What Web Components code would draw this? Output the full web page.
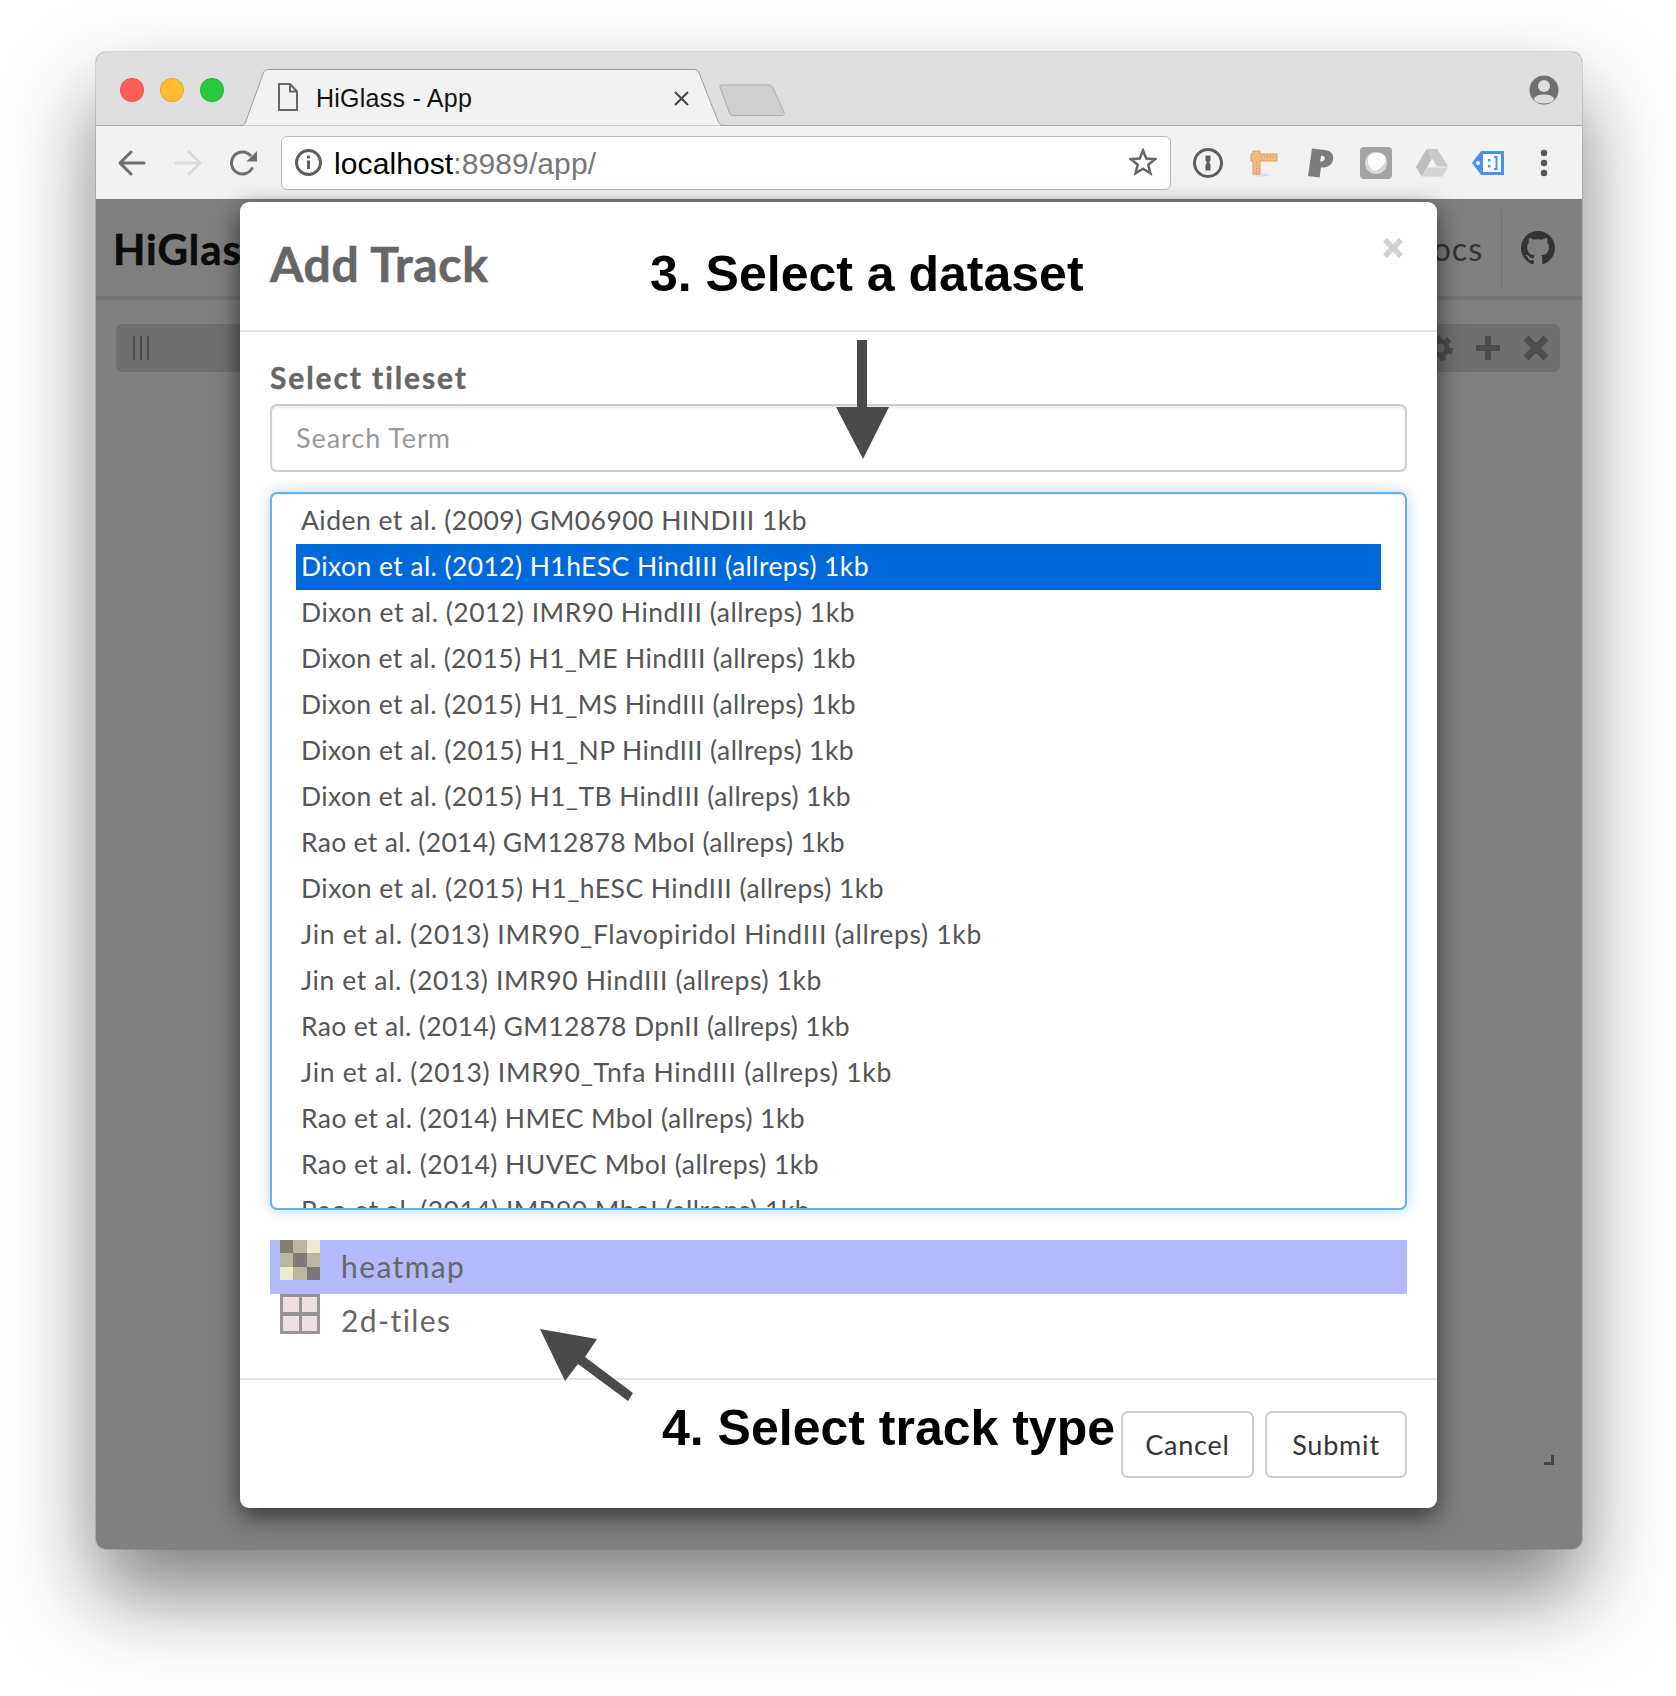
<!DOCTYPE html>
<html lang="en">
<head>
<meta charset="utf-8">
<title>HiGlass - App</title>
<style>
  html, body { margin: 0; background: #fff; }
  body { font-family: "Liberation Sans", sans-serif; }
  #stage { position: relative; width: 1676px; height: 1696px; box-sizing: border-box; padding: 52px 94px 0 96px; overflow: hidden; }
</style>
</head>
<body>
<div id="stage">
  <browser-window title="HiGlass - App" host="localhost" path=":8989/app/">
    <higlass-app></higlass-app>
    <add-track-modal heading="Add Track">
      <tileset-list selected="1">
        <span data-w="506">Aiden et al. (2009) GM06900 HINDIII 1kb</span>
        <span data-w="568">Dixon et al. (2012) H1hESC HindIII (allreps) 1kb</span>
        <span data-w="554">Dixon et al. (2012) IMR90 HindIII (allreps) 1kb</span>
        <span data-w="555">Dixon et al. (2015) H1_ME HindIII (allreps) 1kb</span>
        <span data-w="555">Dixon et al. (2015) H1_MS HindIII (allreps) 1kb</span>
        <span data-w="553">Dixon et al. (2015) H1_NP HindIII (allreps) 1kb</span>
        <span data-w="550">Dixon et al. (2015) H1_TB HindIII (allreps) 1kb</span>
        <span data-w="544">Rao et al. (2014) GM12878 MboI (allreps) 1kb</span>
        <span data-w="583">Dixon et al. (2015) H1_hESC HindIII (allreps) 1kb</span>
        <span data-w="681">Jin et al. (2013) IMR90_Flavopiridol HindIII (allreps) 1kb</span>
        <span data-w="521">Jin et al. (2013) IMR90 HindIII (allreps) 1kb</span>
        <span data-w="549">Rao et al. (2014) GM12878 DpnII (allreps) 1kb</span>
        <span data-w="591">Jin et al. (2013) IMR90_Tnfa HindIII (allreps) 1kb</span>
        <span data-w="504">Rao et al. (2014) HMEC MboI (allreps) 1kb</span>
        <span data-w="518">Rao et al. (2014) HUVEC MboI (allreps) 1kb</span>
        <span data-w="509">Rao et al. (2014) IMR90 MboI (allreps) 1kb</span>
      </tileset-list>
      <track-type kind="heatmap" active>heatmap</track-type>
      <track-type kind="tiles">2d-tiles</track-type>
    </add-track-modal>
  </browser-window>

  <hg-arrow points="857,340 867,340 867,407 889,407 863,459 836,407 857,407"></hg-arrow>
  <hg-arrow points="540,1329 597,1339 585,1357 633,1393 628,1401 578,1364 565,1381"></hg-arrow>
  <hg-note style="left:650px;top:244px">3. Select a dataset</hg-note>
  <hg-note style="left:662px;top:1398px">4. Select track type</hg-note>
</div>

<script>
const UI_FONT = `Lato, "Noto Sans", sans-serif`;

class BrowserWindow extends HTMLElement {
  constructor() {
    super();
    this.attachShadow({ mode: "open" });
  }

  static get styles() {
    return /* css */ `
    :host {
      display: flex;
      flex-direction: column;
      width: 1486px;
      height: 1497px;
      border-radius: 10px;
      background: #808080;
      box-shadow: 0 45px 85px rgba(0, 0, 0, .5), 0 0 0 1px rgba(0, 0, 0, .12);
      font-family: "Liberation Sans", sans-serif;
    }
    .strip {
      display: flex;
      align-items: center;
      box-sizing: border-box;
      height: 74px;
      flex: none;
      padding-left: 24px;
      background: #dedede;
      border-bottom: 1px solid #a6a6a6;
      border-radius: 10px 10px 0 0;
    }
    .lights { display: flex; gap: 16px; margin-top: 2px; }
    .lights i { width: 24px; height: 24px; border-radius: 50%; box-sizing: border-box; border: 1px solid rgba(0, 0, 0, .1); }
    .tab {
      position: relative;
      display: flex;
      align-items: center;
      align-self: flex-end;
      box-sizing: border-box;
      width: 484px;
      height: 57px;
      margin: 0 0 -1px 17px;
      padding: 2px 36px 0 37px;
      font-size: 25px;
      letter-spacing: .25px;
      color: #111;
    }
    .tab > svg.shape { position: absolute; left: 0; top: 0; }
    .tab > span { position: relative; margin-left: 18px; }
    .tab > svg.doc { position: relative; flex: none; margin-top: -4px; }
    .tab > svg.close { position: relative; margin-left: auto; }
    .newtab { align-self: flex-end; margin: 0 0 8px -6px; }
    .profile { margin: 2px 23px 0 auto; }
    .toolbar {
      display: flex;
      align-items: center;
      box-sizing: border-box;
      flex: none;
      height: 74px;
      padding: 0 0 0 7.5px;
      background: #f2f2f2;
      border-bottom: 1px solid #7a7a7a;
    }
    .nav { display: flex; justify-content: center; width: 56px; flex: none; }
    .address {
      display: flex;
      align-items: center;
      box-sizing: border-box;
      width: 890px;
      height: 54px;
      margin: 0 9px 0 9.5px;
      padding: 0 13px 0 13px;
      background: #fff;
      border: 1px solid #b9b9b9;
      border-radius: 6px;
      font-size: 30px;
      letter-spacing: .1px;
      color: #000;
    }
    .address span { margin: 2px 0 0 12px; }
    .address em { font-style: normal; color: #777; }
    .address svg:last-child { margin: -2px 0 0 auto; }
    .ext { display: flex; align-items: center; justify-content: center; width: 56px; flex: none; }
    .content { position: relative; flex: 1; min-height: 0; border-radius: 0 0 10px 10px; }
    `;
  }

  connectedCallback() {
    this.render();
  }

  render() {
    this.shadowRoot.innerHTML = /* html */ `
      <style>${BrowserWindow.styles}</style>
      <div class="strip">
        <div class="lights">
          <i style="background:#ff5f57"></i><i style="background:#ffbd2e"></i><i style="background:#28c940"></i>
        </div>
        <div class="tab">
          <svg class="shape" width="484" height="57" viewBox="0 0 484 57">
            <path d="M0 56.5C3 56.5 4 55 5 52L22 5C23 2 24 .5 28 .5H453C456 .5 457.500 2 458.500 5L477 52C478 55 480 56.500 484 56.500" fill="#f2f2f2" stroke="#9d9d9d"/>
          </svg>
          <svg class="doc" width="20" height="28" viewBox="0 0 20 28" fill="none" stroke="#666" stroke-width="2">
            <path d="M1 1H12L19 8.500V27H1Z"/><path d="M12 1V8.500H19"/>
          </svg>
          <span>${this.getAttribute("title")}</span>
          <svg class="close" width="15" height="15" viewBox="0 0 15 15" stroke="#444" stroke-width="2"><path d="M1 1L14 14M14 1L1 14"/></svg>
        </div>
        <svg class="newtab" width="66" height="33" viewBox="0 0 66 33">
          <path d="M1 3C.5 1.500 1.500 1 3 1H50C52 1 53 2 53.500 3L65 28C65.500 30 65 31.500 63 31.500H14C12 31.500 11 30.500 10.500 29Z" fill="#cfcfcf" stroke="#adadad"/>
        </svg>
        <svg class="profile" width="30" height="30" viewBox="0 0 30 30">
          <defs><clipPath id="p"><circle cx="15" cy="15" r="14.500"/></clipPath></defs>
          <g clip-path="url(#p)"><rect width="30" height="30" fill="#6f6f6f"/>
          <circle cx="15" cy="11" r="6" fill="#dedede"/><ellipse cx="15" cy="24" rx="10" ry="4.500" fill="#dedede"/></g>
        </svg>
      </div>
      <div class="toolbar">
        <div class="nav">
          <svg width="28" height="26" viewBox="0 0 28 26" fill="none" stroke="#6e6e6e" stroke-width="3" stroke-linecap="round" stroke-linejoin="round"><path d="M26 13H3M13 2L2 13L13 24"/></svg>
        </div>
        <div class="nav">
          <svg width="28" height="26" viewBox="0 0 28 26" fill="none" stroke="#dcdcdc" stroke-width="3" stroke-linecap="round" stroke-linejoin="round"><path d="M2 13H25M15 2L26 13L15 24"/></svg>
        </div>
        <div class="nav">
          <svg width="28" height="26" viewBox="0 0 28 26"><path d="M22.500 17.500A11 11 0 1 1 21 6" fill="none" stroke="#6e6e6e" stroke-width="3"/><path d="M27 1V11.500H16.500Z" fill="#6e6e6e"/></svg>
        </div>
        <div class="address">
          <svg width="27" height="27" viewBox="0 0 27 27" fill="none" stroke="#5e5e5e"><circle cx="13.500" cy="13.500" r="12" stroke-width="3"/><path d="M13.500 11.500V20" stroke-width="3"/><path d="M13.500 6.500V9.500" stroke-width="3"/></svg>
          <span>${this.getAttribute("host")}<em>${this.getAttribute("path")}</em></span>
          <svg width="28" height="28" viewBox="0 0 28 28" fill="none" stroke="#666" stroke-width="2.500" stroke-linejoin="miter"><path d="M14 2.500L17.300 10.600L26 11.200L19.300 16.800L21.400 25.300L14 20.700L6.600 25.300L8.700 16.800L2 11.200L10.700 10.600Z"/></svg>
        </div>
        <div class="ext"><svg width="32" height="32" viewBox="0 0 32 32"><circle cx="16" cy="16" r="13.500" fill="#f2f2f2" stroke="#5f5f5f" stroke-width="3"/><path d="M13.500 8.500H18.500V13.500L17.300 15.500L18.500 17.500V23.500H13.500V18L15 15.500L13.500 13.500Z" fill="#5f5f5f"/></svg></div>
        <div class="ext"><svg width="32" height="32" viewBox="0 0 32 32"><ellipse cx="12" cy="28" rx="9" ry="1.500" fill="#ddd"/><path d="M5 4H12V7H29V14H12V27H5V14H3V7H5Z" fill="#f0bc82" stroke="#dd9f5c"/><path d="M13 10H28" stroke="#c98b4a" stroke-dasharray="1 2"/><path d="M8.500 15V26" stroke="#c98b4a" stroke-dasharray="1 2"/></svg></div>
        <div class="ext"><svg width="32" height="32" viewBox="0 0 32 32"><path d="M8 1.500L21 3C28 4 30 8.500 29 13C28 18 23 21 17 20.500L15.500 30.500L4 29ZM17.200 8.500L16 14.500C19 14.800 20.500 13.500 20.800 11.800C21 10 20 8.800 17.200 8.500Z" fill="#7d7d7d" fill-rule="evenodd"/></svg></div>
        <div class="ext"><svg width="32" height="32" viewBox="0 0 32 32"><rect width="32" height="32" rx="4" fill="#a3a3a3"/><circle cx="16" cy="16" r="11" fill="#d9d9d9"/><path d="M8 13C8 8 12 6 17 6C22 6 25 8 26 11C25 17 21 22 14 24C10 21 8 18 8 13Z" fill="#fff"/></svg></div>
        <div class="ext"><svg width="32" height="28" viewBox="0 0 32 28"><path d="M10.500 0H21.500L32 17.500H21L10.500 0Z" fill="#c9c9c9"/><path d="M10.500 0L16 9.500L5.500 27.500L0 18Z" fill="#bdbdbd"/><path d="M11 18.500H32L26.500 27.500H5.500Z" fill="#d3d3d3"/></svg></div>
        <div class="ext"><svg width="32" height="24" viewBox="0 0 32 24"><path d="M9 0H32V24H9L0 12Z" fill="#4a90f4"/><circle cx="6" cy="12" r="2" fill="#fff"/><rect x="11" y="3" width="18" height="18" fill="#fff"/><path d="M16 8H18.500V10.500H16ZM16 14H18.500V16.500H16Z" fill="#4a90f4"/><path d="M22 6H24.500V18H22" fill="none" stroke="#4a90f4" stroke-width="2"/></svg></div>
        <div class="ext"><svg width="8" height="30" viewBox="0 0 8 30" fill="#555"><circle cx="4" cy="5" r="3.200"/><circle cx="4" cy="15" r="3.200"/><circle cx="4" cy="25" r="3.200"/></svg></div>
      </div>
      <div class="content"><slot></slot></div>
    `;
  }
}

class HiglassApp extends HTMLElement {
  constructor() {
    super();
    this.attachShadow({ mode: "open" });
  }

  static get styles() {
    return /* css */ `
    :host { display: block; font-family: ${UI_FONT}; }
    .nav {
      display: flex;
      align-items: center;
      box-sizing: border-box;
      height: 100px;
      padding: 0 27px 0 17px;
      border-bottom: 4px solid #767676;
    }
    .logo { font-size: 42px; font-weight: 700; color: #0c0c0c; letter-spacing: 1px; -webkit-text-stroke: .6px #0c0c0c; margin-top: 1px; }
    .docs { margin-left: auto; font-size: 32px; color: #333; letter-spacing: 1px; padding-right: 18px; height: 79px; line-height: 79px; }
    .sep { width: 1px; height: 79px; background: #747474; margin-right: 19px; }
    .bar {
      display: flex;
      align-items: center;
      height: 48px;
      margin: 24px 22px 0 20px;
      padding-left: 17px;
      background: #707070;
      border-radius: 6px;
    }
    .grip { display: flex; gap: 5px; }
    .grip i { width: 2px; height: 24px; background: #4a4a4a; }
    .tools { display: flex; margin-left: auto; }
    .tools span { display: flex; align-items: center; justify-content: center; width: 48px; height: 48px; }
    `;
  }

  connectedCallback() {
    this.shadowRoot.innerHTML = /* html */ `
      <style>${HiglassApp.styles}</style>
      <div class="nav">
        <span class="logo">HiGlass</span>
        <span class="docs">Docs</span>
        <i class="sep"></i>
        <svg width="34" height="34" viewBox="0 0 16 16" fill="#333"><path d="M8 0C3.580 0 0 3.580 0 8c0 3.540 2.290 6.530 5.470 7.590.4.070.55-.17.55-.38 0-.19-.01-.82-.01-1.490-2.010.37-2.530-.49-2.690-.94-.09-.23-.48-.94-.82-1.130-.28-.15-.68-.52-.01-.53.63-.01 1.080.58 1.230.82.72 1.210 1.870.87 2.330.66.07-.52.28-.87.51-1.070-1.780-.2-3.640-.89-3.640-3.950 0-.87.31-1.590.82-2.150-.08-.2-.36-1.020.08-2.120 0 0 .67-.21 2.200.82.64-.18 1.320-.27 2-.27.68 0 1.360.09 2 .27 1.530-1.040 2.200-.82 2.200-.82.44 1.100.16 1.920.08 2.120.51.56.82 1.270.82 2.150 0 3.070-1.870 3.750-3.650 3.950.29.25.54.73.54 1.480 0 1.070-.01 1.930-.01 2.200 0 .21.15.46.55.38A8.013 8.013 0 0016 8c0-4.420-3.580-8-8-8z"/></svg>
      </div>
      <div class="bar">
        <div class="grip"><i></i><i></i><i></i></div>
        <div class="tools">
          <span><svg width="28" height="28" viewBox="0 0 28 28" fill="none" stroke="#4d4d4d"><circle cx="14" cy="14" r="7" stroke-width="5"/><circle cx="14" cy="14" r="11" stroke-width="4" stroke-dasharray="6 5.500"/></svg></span>
          <span><svg width="24" height="24" viewBox="0 0 24 24" fill="#4d4d4d"><path d="M9 0H15V9H24V15H15V24H9V15H0V9H9Z"/></svg></span>
          <span><svg width="24" height="24" viewBox="0 0 24 24" stroke="#4d4d4d" stroke-width="7"><path d="M2 2L22 22M22 2L2 22"/></svg></span>
        </div>
      </div>
      <svg class="handle" width="10" height="10" viewBox="0 0 10 10" fill="#444" style="position:absolute;right:28px;bottom:84px"><path d="M7 0H10V10H0V7H7Z"/></svg>
    `;
  }
}

class AddTrackModal extends HTMLElement {
  constructor() {
    super();
    this.attachShadow({ mode: "open" });
  }

  static get styles() {
    return /* css */ `
    :host {
      position: absolute;
      left: 144px;
      top: 1.5px;
      display: flex;
      flex-direction: column;
      box-sizing: border-box;
      width: 1197px;
      height: 1306px;
      background: #fff;
      border-radius: 9px;
      box-shadow: 0 8px 26px rgba(0, 0, 0, .62);
      font-family: ${UI_FONT};
      color: #666;
    }
    header {
      display: flex;
      align-items: center;
      justify-content: space-between;
      box-sizing: border-box;
      height: 130px;
      padding: 0 34px 4px 30px;
      border-bottom: 2px solid #e5e5e5;
    }
    h4 { margin: 0; font-size: 48px; font-weight: 700; color: #666; letter-spacing: .7px; -webkit-text-stroke: .6px #666; }
    .close { margin-top: -32px; }
    .body { flex: 1; padding: 25px 30px 29px; }
    label { display: block; font-size: 30px; line-height: 40px; font-weight: 700; color: #666; letter-spacing: 1.9px; -webkit-text-stroke: .4px #666; }
    .search {
      box-sizing: border-box;
      height: 68px;
      margin: 7px 0 20px;
      padding: 0 24px;
      line-height: 63px;
      border: 2px solid #ccc;
      border-radius: 7px;
      box-shadow: inset 0 2px 2px rgba(0, 0, 0, .075);
      font-size: 27px;
      color: #999;
      letter-spacing: .95px;
    }
    .types { margin-top: 30px; }
    footer {
      display: flex;
      justify-content: flex-end;
      gap: 11px;
      box-sizing: border-box;
      height: 130px;
      padding: 31px 30px 0;
      border-top: 2px solid #e5e5e5;
    }
    button {
      box-sizing: border-box;
      height: 67px;
      padding: 0;
      background: #fff;
      border: 2px solid #ccc;
      border-radius: 7px;
      font: 27px ${UI_FONT};
      color: #333;
      letter-spacing: .8px;
    }
    .cancel { width: 133px; }
    .submit { width: 142px; }
    `;
  }

  connectedCallback() {
    this.shadowRoot.innerHTML = /* html */ `
      <style>${AddTrackModal.styles}</style>
      <header>
        <h4>${this.getAttribute("heading")}</h4>
        <svg class="close" width="20" height="20" viewBox="0 0 20 20" stroke="#cfcfcf" stroke-width="5.500"><path d="M2 2L18 18M18 2L2 18"/></svg>
      </header>
      <div class="body">
        <label>Select tileset</label>
        <div class="search">Search Term</div>
        <slot name="list"></slot>
        <div class="types"><slot></slot></div>
      </div>
      <footer>
        <button class="cancel">Cancel</button>
        <button class="submit">Submit</button>
      </footer>
    `;
    this.querySelector("tileset-list").slot = "list";
  }
}

class TilesetList extends HTMLElement {
  constructor() {
    super();
    this.attachShadow({ mode: "open" });
  }

  static get styles() {
    return /* css */ `
    :host {
      display: block;
      box-sizing: border-box;
      height: 718px;
      padding: 4px 24px;
      overflow: hidden;
      border: 2px solid #66afe9;
      border-radius: 7px;
      box-shadow: inset 0 1px 1px rgba(0, 0, 0, .075), 0 0 14px rgba(102, 175, 233, .5);
    }
    ::slotted(span) {
      display: block;
      height: 46px;
      padding: 0 4px 0 5px;
      line-height: 45px;
      font-size: 26.5px;
      color: #555;
      white-space: nowrap;
    }
    ::slotted(span[aria-selected="true"]) { background: #0069d9; color: #fff; }
    `;
  }

  connectedCallback() {
    this.shadowRoot.innerHTML = `<style>${TilesetList.styles}</style><slot></slot>`;
    const selected = Number(this.getAttribute("selected"));
    const range = document.createRange();
    [...this.children].forEach((row, i) => {
      row.setAttribute("aria-selected", i === selected);
      // our font is not the original one, so track each row out to its width in the reference
      range.selectNodeContents(row);
      const spare = Number(row.dataset.w) - range.getBoundingClientRect().width;
      row.style.letterSpacing = `${spare / row.textContent.length}px`;
    });
  }
}

class TrackType extends HTMLElement {
  constructor() {
    super();
    this.attachShadow({ mode: "open" });
  }

  static get styles() {
    return /* css */ `
    :host {
      display: flex;
      box-sizing: border-box;
      height: 54px;
      padding-left: 10px;
      font-size: 30px;
      line-height: 52px;
      color: #666;
      letter-spacing: 1.4px;
    }
    :host([active]) { background: #b3bbfc; }
    svg { display: block; flex: none; margin-right: 21px; }
    `;
  }

  get icon() {
    if (this.getAttribute("kind") === "heatmap") {
      return /* html */ `
        <svg width="40" height="40" viewBox="0 0 3 3" shape-rendering="crispEdges">
          <rect width="1" height="1" fill="#857f6d"/><rect x="1" width="1" height="1" fill="#b9b79d"/><rect x="2" width="1" height="1" fill="#ecebd0"/>
          <rect y="1" width="1" height="1" fill="#b9b79d"/><rect x="1" y="1" width="1" height="1" fill="#7f7a78"/><rect x="2" y="1" width="1" height="1" fill="#b9b79d"/>
          <rect y="2" width="1" height="1" fill="#ecebd0"/><rect x="1" y="2" width="1" height="1" fill="#b9b79d"/><rect x="2" y="2" width="1" height="1" fill="#7a7674"/>
        </svg>`;
    }
    return /* html */ `
      <svg width="40" height="40" viewBox="0 0 40 40" shape-rendering="crispEdges">
        <rect width="40" height="40" fill="#959595"/>
        <rect x="3" y="3" width="16" height="15" fill="#eee0e0"/><rect x="22" y="3" width="15" height="15" fill="#eee0e0"/>
        <rect x="3" y="22" width="16" height="15" fill="#eee0e0"/><rect x="22" y="22" width="15" height="15" fill="#eee0e0"/>
      </svg>`;
  }

  connectedCallback() {
    this.shadowRoot.innerHTML = `<style>${TrackType.styles}</style>${this.icon}<span><slot></slot></span>`;
  }
}

// callouts drawn over the finished screenshot
class HgNote extends HTMLElement {
  constructor() {
    super();
    this.attachShadow({ mode: "open" });
  }

  connectedCallback() {
    this.shadowRoot.innerHTML = /* html */ `
      <style>
        :host {
          position: absolute;
          font: 700 50px/60px "Liberation Sans", sans-serif;
          color: #000;
          white-space: nowrap;
        }
      </style>
      <slot></slot>
    `;
  }
}

class HgArrow extends HTMLElement {
  constructor() {
    super();
    this.attachShadow({ mode: "open" });
  }

  connectedCallback() {
    this.shadowRoot.innerHTML = /* html */ `
      <style>:host { position: absolute; left: 0; top: 0; pointer-events: none; }</style>
      <svg width="1676" height="1696" viewBox="0 0 1676 1696" style="display:block">
        <polygon points="${this.getAttribute("points")}" fill="#4a4a4a"/>
      </svg>
    `;
  }
}

customElements.define("browser-window", BrowserWindow);
customElements.define("higlass-app", HiglassApp);
customElements.define("add-track-modal", AddTrackModal);
customElements.define("tileset-list", TilesetList);
customElements.define("track-type", TrackType);
customElements.define("hg-note", HgNote);
customElements.define("hg-arrow", HgArrow);
</script>
</body>
</html>
